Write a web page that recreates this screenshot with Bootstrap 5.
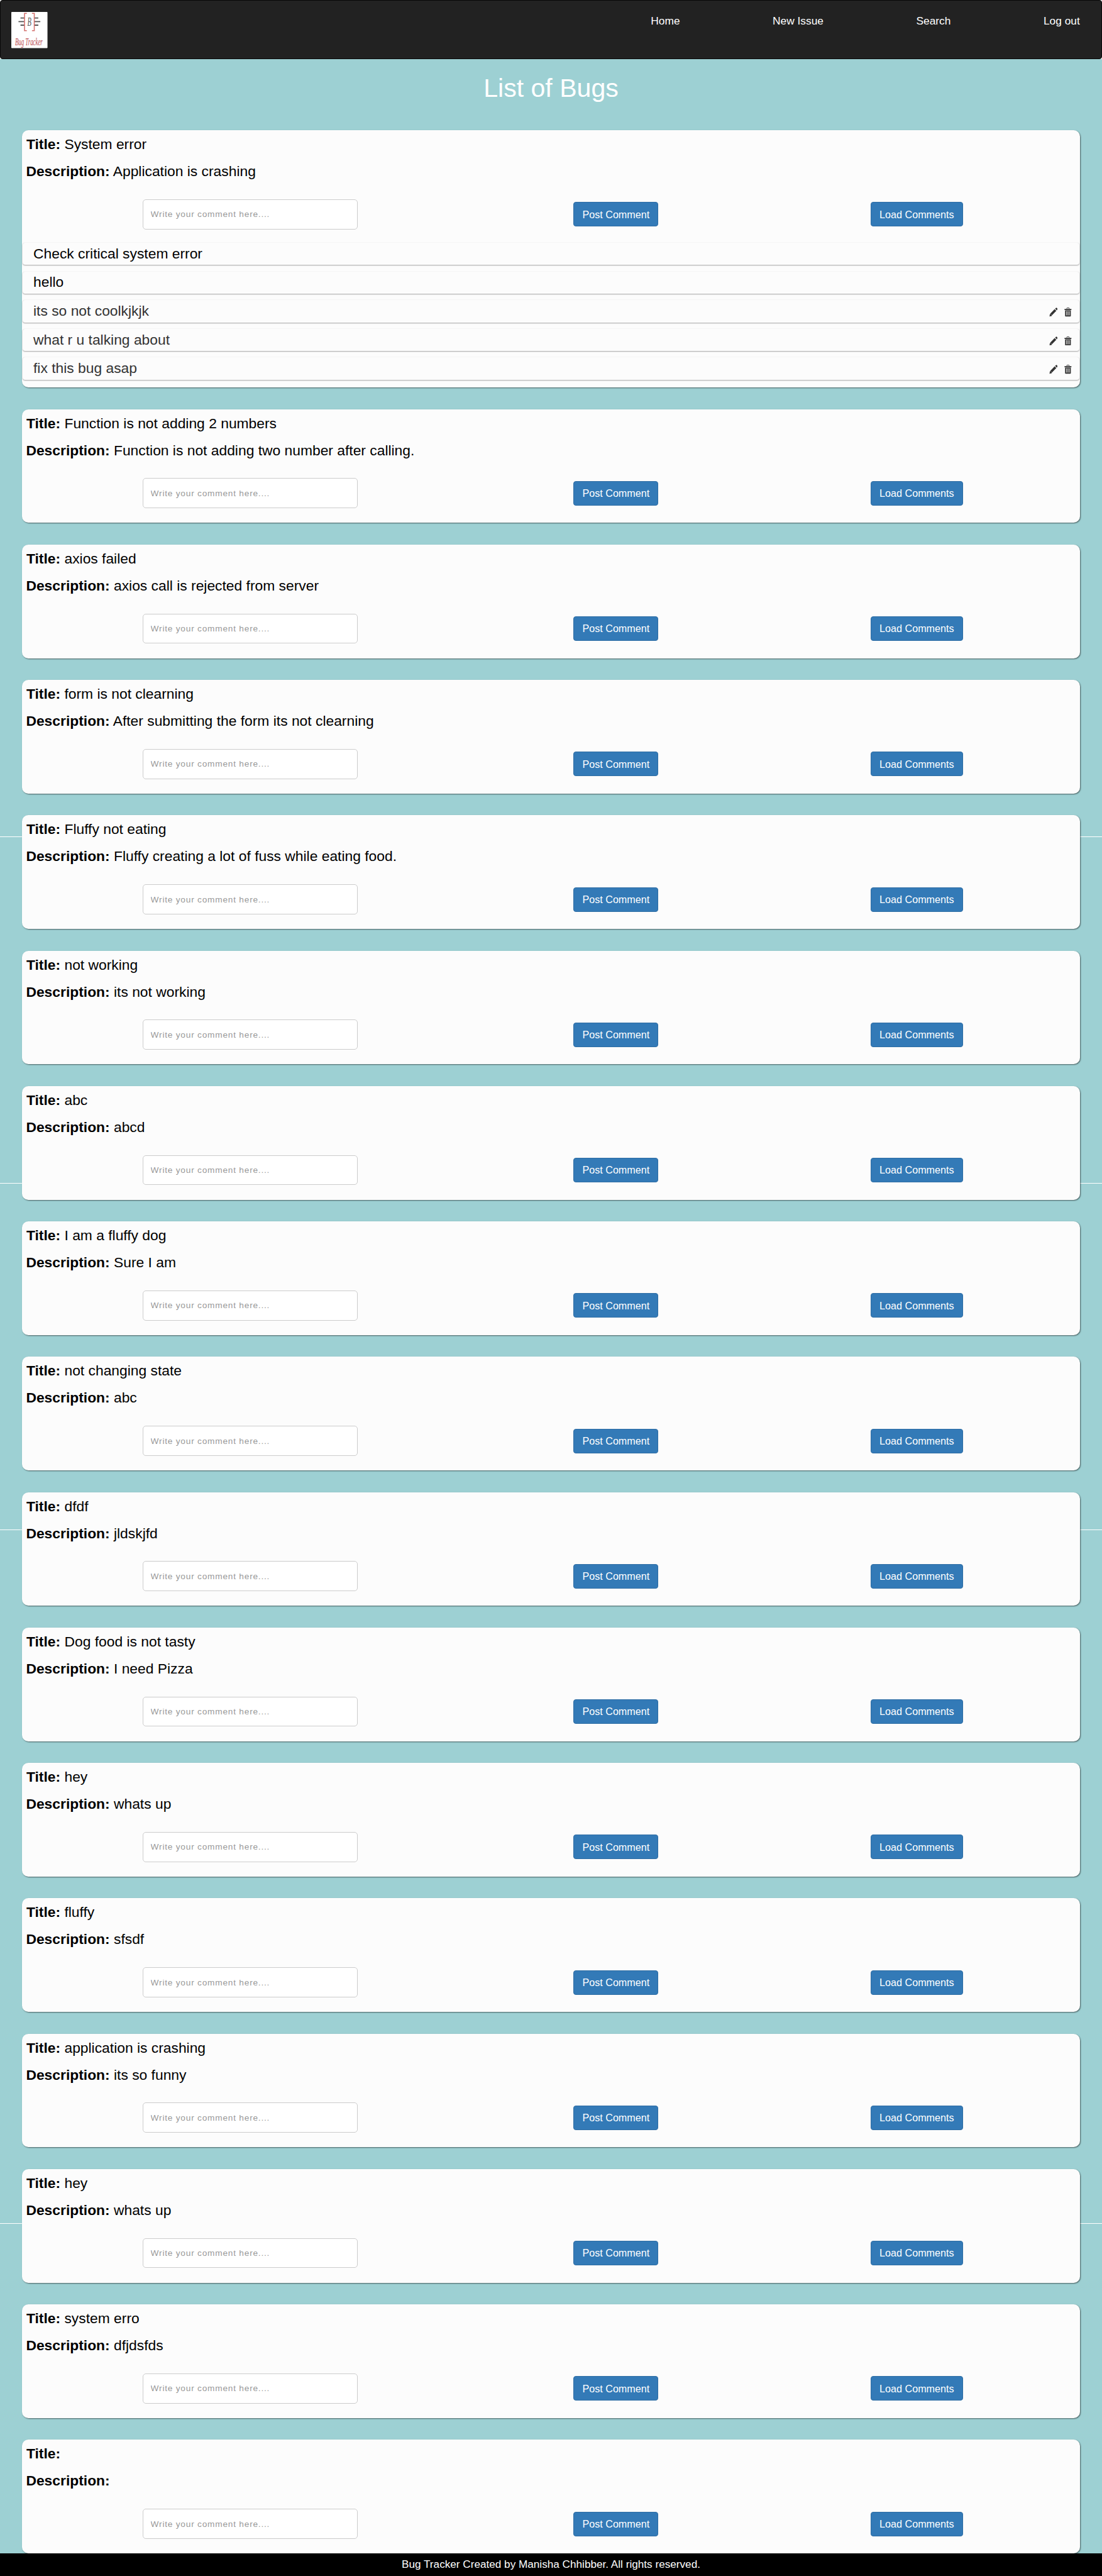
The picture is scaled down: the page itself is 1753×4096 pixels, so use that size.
<!DOCTYPE html>
<html lang="en">
<head>
<meta charset="utf-8">
<meta name="viewport" content="width=device-width, initial-scale=1">
<title>Bug Tracker</title>
<link href="https://cdn.jsdelivr.net/npm/bootstrap@5.3.0/dist/css/bootstrap.min.css" rel="stylesheet">
<style>
  html { font-size: 9.132px; background: #9dd0d3; }
  body { font-family: "Liberation Sans", Arial, sans-serif; font-size: 1.9rem; color: #000; background: #9dd0d3; min-height: 4096px; }
  .topbar-wrap { background: #fff; }
  .topbar { height: 10.27rem; padding: 2rem 3.75rem 0 1.9rem; background: #222; border: 1px solid #080808; border-radius: 4px; }
  .logo { width: 6.3rem; height: 6.3rem; display: block; overflow: visible; }
  .topbar .nav { gap: 16.15rem; padding-top: .18rem; }
  .topbar .nav-link { padding: 0; color: #fff; line-height: 2.7rem; }
  .page-title { font-size: 4.5rem; line-height: 5rem; margin: 2.6rem 0 0; padding-bottom: 4.84rem; color: #fff; font-weight: 400; }
  .bug-list { padding: 0 3.8rem; gap: 3.8rem; }
  .bug { min-height: 19.773rem; padding-bottom: 1.34rem; background: #fcfcfc; border-radius: 1.1rem; box-shadow: 1px 1px 2px rgba(0,0,0,.55); }
  .bug p { font-size: 2.5rem; line-height: 3.57rem; margin: 0; padding: 0 .8rem; }
  .bug p:first-child { padding-top: .65rem; margin-bottom: 1.13rem; }
  .bug p:nth-child(2) { padding-left: .74rem; }
  .bug-form { margin-top: 3.1rem; height: 5.23rem; padding-left: 21.08rem; }
  .bug-form .form-control { width: 37.45rem; height: 5.23rem; padding: 0 1.25rem; font-size: 1.5rem; letter-spacing: .085rem; border: 1px solid #ccc; border-radius: 5px; background: #fff; }
  .bug-form .form-control::placeholder { color: #999; opacity: 1; }
  .btn-bug { --bs-btn-color: #fff; --bs-btn-bg: #337ab7; --bs-btn-border-color: #2e6da4; --bs-btn-hover-color: #fff; --bs-btn-hover-bg: #286090; --bs-btn-border-radius: 4px; height: 4.27rem; padding: 0; font-size: 1.77rem; line-height: 1; white-space: nowrap; }
  .btn-post { width: 14.8rem; margin-left: 37.57rem; }
  .btn-load { width: 16.1rem; margin-left: 36.95rem; }
  .comments { margin-top: 2.31rem; padding: 0 1px; gap: 1.13rem; }
  .comment-item { height: 3.87rem; padding: 0 1.3rem 0 1.9rem; font-size: 2.5rem; line-height: 3.57rem; background: #fcfcfc; border-radius: 4px; box-shadow: 0 1px 2px rgba(0,0,0,.35), 0 0 1px rgba(0,0,0,.1); }
  .comment-item > span:first-child { padding-bottom: .1rem; }
  .comment-own { color: #333; }
  .comment-item svg { width: 1.5rem; height: 1.6rem; display: block; }
  .comment-item .tools { gap: 1.05rem; padding-top: .3rem; }
  .page-foot { height: 3.9rem; line-height: 3.85rem; font-size: 1.88rem; background: #000; color: #fff; }
  /* seams of the tiled backdrop */
  .seam { position: absolute; left: 0; right: 0; height: 1px; background: #fff; }
</style>
</head>
<body class="position-relative d-flex flex-column">
<div class="seam" style="top:1330px"></div>
<div class="seam" style="top:1881px"></div>
<div class="seam" style="top:2432px"></div>
<div class="seam" style="top:3535px"></div>
<header class="topbar-wrap">
  <nav class="topbar d-flex justify-content-between align-items-start">
    <a href="#" aria-label="Bug Tracker">
      <svg class="logo" viewBox="0 0 63 63">
        <rect width="63" height="63" rx="1" fill="#fff"/>
        <path d="M16 10.5h7M12.500 16.800h10M16 23h7M40 10.500h7M40 16.800h10.500M40 23h7" stroke="#555" stroke-width="2"/>
        <path d="M27 2.500h-4v30h4M36 2.500h4v30h-4" fill="none" stroke="#d4706d" stroke-width="1.700"/>
        <text x="28" y="24.500" font-family="Liberation Serif, serif" font-style="italic" font-size="21" fill="#555" textLength="7" lengthAdjust="spacingAndGlyphs">B</text>
        <text x="6.500" y="58" font-family="Liberation Serif, serif" font-style="italic" font-size="19" fill="#b94a50" textLength="48" lengthAdjust="spacingAndGlyphs">Bug Tracker</text>
      </svg>
    </a>
    <ul class="nav flex-nowrap">
      <li class="nav-item"><a class="nav-link" href="#">Home</a></li>
      <li class="nav-item"><a class="nav-link" href="#">New Issue</a></li>
      <li class="nav-item"><a class="nav-link" href="#">Search</a></li>
      <li class="nav-item"><a class="nav-link" href="#">Log out</a></li>
    </ul>
  </nav>
</header>
<h1 class="page-title text-center">List of Bugs</h1>
<main class="bug-list d-flex flex-column position-relative" id="bugs"></main>
<footer class="page-foot text-center mt-auto position-relative">Bug Tracker Created by Manisha Chhibber. All rights reserved.</footer>

<script>
  const bugs = [
    ["System error", "Application is crashing", [["Check critical system error", 0], ["hello", 0], ["its so not coolkjkjk", 1], ["what r u talking about", 1], ["fix this bug asap", 1]]],
    ["Function is not adding 2 numbers", "Function is not adding two number after calling."],
    ["axios failed", "axios call is rejected from server"],
    ["form is not clearning", "After submitting the form its not clearning"],
    ["Fluffy not eating", "Fluffy creating a lot of fuss while eating food."],
    ["not working", "its not working"],
    ["abc", "abcd"],
    ["I am a fluffy dog", "Sure I am"],
    ["not changing state", "abc"],
    ["dfdf", "jldskjfd"],
    ["Dog food is not tasty", "I need Pizza"],
    ["hey", "whats up"],
    ["fluffy", "sfsdf"],
    ["application is crashing", "its so funny"],
    ["hey", "whats up"],
    ["system erro", "dfjdsfds"],
    ["", ""]
  ];
  const tools = `<span class="tools d-flex">
    <svg viewBox="0 0 15 16"><path d="M10.300 1.800 12 .5q.6-.4 1.200.1l1.400 1.500q.5.6 0 1.200l-1.400 1.500zM9.500 2.700l2.900 3-7.500 7.700-.9-.2-.3-1.300-1.300-.2-.3-1.400zM1.400 11l-.9 4.500 4.500-1-.7-.5-.4-1.300-1.200-.3-.3-1.300z" fill="#333"/></svg>
    <svg viewBox="0 0 15 16"><path d="M5.500 2.500V1.200q0-.6.600-.6h3q.6 0 .6.600v1.300" fill="none" stroke="#333"/><path d="M1.500 2.500h12v1.800h-12zM2.500 5h10v9.500q0 1-1 1h-8q-1 0-1-1zM4.600 6.200v7.600h1V6.200zm2.400 0v7.600h1V6.200zm2.400 0v7.600h1V6.200z" fill="#333" fill-rule="evenodd"/></svg>
  </span>`;
  document.getElementById("bugs").innerHTML = bugs.map(([title, text, comments]) => `
    <article class="bug">
      <p><b>Title:</b> ${title}</p>
      <p><b>Description:</b> ${text}</p>
      <div class="bug-form d-flex align-items-center">
        <input class="form-control flex-shrink-0" placeholder="Write your comment here....">
        <button class="btn btn-bug btn-post">Post Comment</button>
        <button class="btn btn-bug btn-load">Load Comments</button>
      </div>
      ${comments ? `<div class="comments d-flex flex-column">${comments.map(([c, own]) =>
        `<div class="comment-item d-flex justify-content-between align-items-center ${own ? "comment-own" : ""}"><span>${c}</span>${own ? tools : ""}</div>`).join("")}</div>` : ""}
    </article>`).join("");
</script>
<script src="https://cdn.jsdelivr.net/npm/bootstrap@5.3.0/dist/js/bootstrap.bundle.min.js"></script>
</body>
</html>
